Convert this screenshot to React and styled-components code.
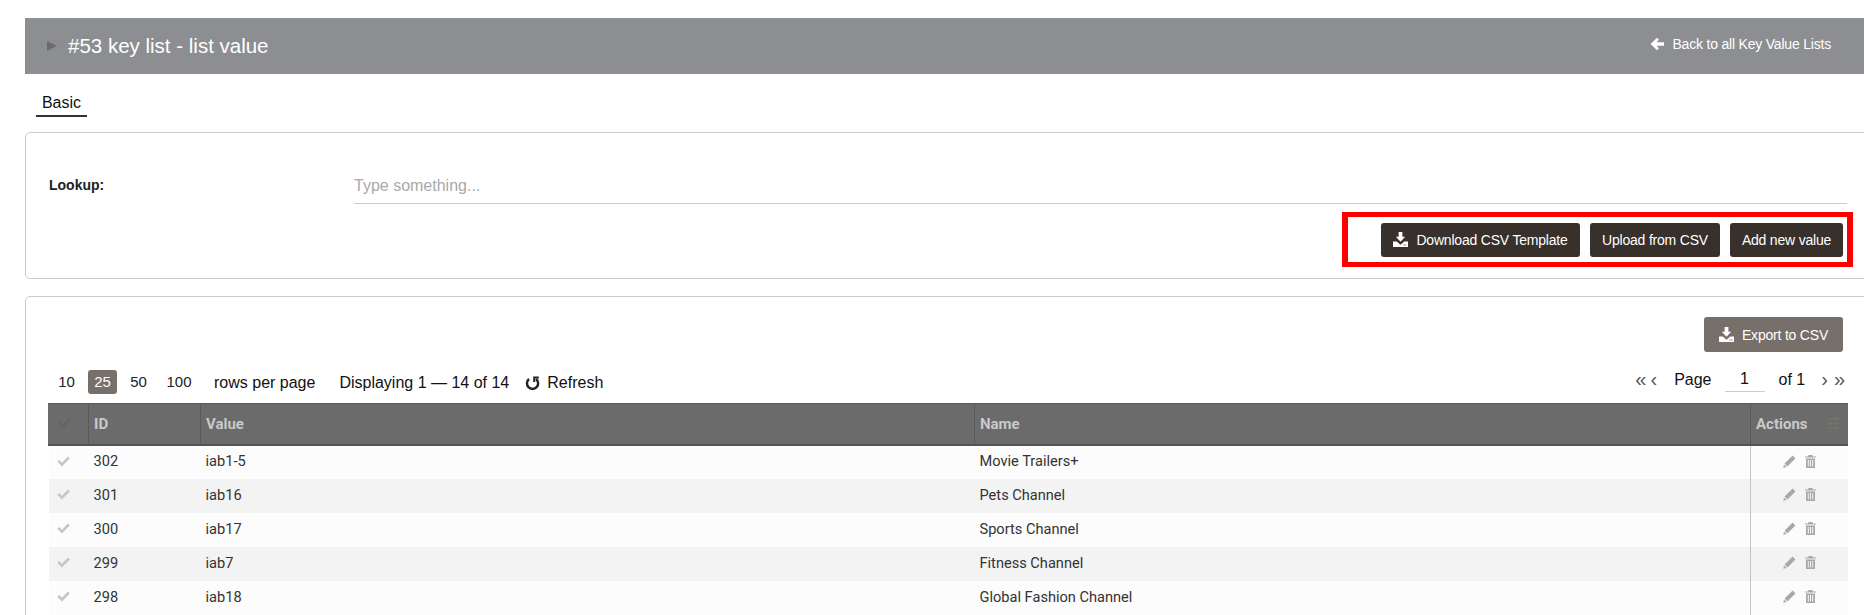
import React from "react";
import styled, { createGlobalStyle } from "styled-components";

const Global = createGlobalStyle`
  html, body { margin: 0; padding: 0; background: #fff; overflow: hidden; height: 615px; }
  body { font-family: "Liberation Sans", Arial, sans-serif; color: #111; }
  * { box-sizing: border-box; }
`;

const Page = styled.div`
  width: 1864px;
  height: 615px;
  overflow: hidden;
  padding: 18px 0 0 25px;
`;
const Header = styled.header`
  height: 56px;
  background: #8c8e91;
  display: flex;
  align-items: center;
  justify-content: space-between;
  padding: 0 33px 0 22px;
  color: #fff;
`;
const TitleWrap = styled.div`
  display: flex;
  align-items: center;
  gap: 11px;
`;
const Caret = styled.span`
  width: 0;
  height: 0;
  border-left: 10px solid #6f6c68;
  border-top: 5px solid transparent;
  border-bottom: 5px solid transparent;
`;
const Title = styled.h1`
  margin: 0;
  font-size: 20.5px;
  font-weight: 400;
`;
const BackLink = styled.a`
  display: flex;
  align-items: center;
  gap: 8px;
  font-size: 14px;
  margin-top: -5px;
  letter-spacing: -0.2px;
`;
const Tabs = styled.nav`
  display: flex;
  padding: 19px 0 0 11px;
  height: 58px;
`;
const Tab = styled.span`
  width: 51px;
  height: 24px;
  text-align: center;
  font-size: 16px;
  line-height: 19px;
  border-bottom: 2px solid #38302b;
  color: #111;
`;
const Card = styled.section`
  border: 1px solid #ccc;
  border-radius: 5px;
  background: #fff;
  margin-right: -12px;
`;
const LookupCard = styled(Card)`
  height: 147px;
  padding: 36px 28px 0 23px;
`;
const LookupRow = styled.div`
  display: grid;
  grid-template-columns: 305px 1fr;
  align-items: center;
  height: 35px;
`;
const Label = styled.label`
  font-size: 14px;
  font-weight: 700;
  color: #222;
  margin-top: -4px;
`;
const Field = styled.div`
  height: 35px;
  border-bottom: 1px solid #ccc;
  color: #a9a9a9;
  font-size: 16px;
  line-height: 34px;
`;
const ActionsOutline = styled.div`
  margin: 8px -6px 0 auto;
  width: 511px;
  height: 55px;
  border: 6px solid #f00;
  border-width: 5px 6px;
  display: flex;
  justify-content: flex-end;
  align-items: center;
  gap: 10px;
  padding-right: 4px;
`;
const Button = styled.button`
  height: ${(p) => p.$h}px;
  border: 0;
  border-radius: 3px;
  background: ${(p) => p.$bg || "#38302b"};
  color: #fff;
  font-family: inherit;
  font-size: 14px;
  letter-spacing: -0.2px;
  display: inline-flex;
  align-items: center;
  justify-content: center;
  gap: 8px;
  padding: 0;
  width: ${(p) => p.$w}px;
`;
const TableCard = styled(Card)`
  margin-top: 17px;
  height: 400px;
  padding: 20px 28px 0 22px;
`;
const ExportRow = styled.div`
  display: flex;
  justify-content: flex-end;
  padding-right: 4px;
`;
const PagingRow = styled.div`
  display: flex;
  align-items: center;
  justify-content: space-between;
  height: 24px;
  margin-top: 18px;
  font-size: 16px;
`;
const PagingLeft = styled.div`
  display: flex;
  align-items: center;
`;
const Size = styled.span`
  width: ${(p) => p.$w}px;
  height: 24px;
  line-height: 24px;
  text-align: center;
  font-size: 15px;
  border-radius: 3px;
  margin-right: ${(p) => p.$mr || 0}px;
  background: ${(p) => (p.$active ? "#766f6a" : "transparent")};
  color: ${(p) => (p.$active ? "#fff" : "#222")};
`;
const PagingText = styled.span`
  margin-top: 2px;
  margin-left: ${(p) => p.$ml || 0}px;
  margin-right: ${(p) => p.$mr || 0}px;
`;
const Refresh = styled.span`
  display: inline-flex;
  align-items: center;
  gap: 7px;
  margin: 2px 0 0 16px;
`;
const Pager = styled.div`
  display: flex;
  align-items: center;
  margin: 0 2px 4px 0;
`;
const PagerGlyph = styled.span`
  color: #555;
  font-size: 20px;
  line-height: 1;
  margin: -3px ${(p) => p.$mr || 0}px 0 ${(p) => p.$ml || 0}px;
`;
const PageInput = styled.span`
  width: 40px;
  height: 24px;
  border-bottom: 1px solid #ccc;
  text-align: center;
  margin: 0 14px 0 13px;
  line-height: 22px;
`;
const Table = styled.table`
  width: 1799px;
  margin-top: 9px;
  border-collapse: collapse;
  table-layout: fixed;
  font-family: Roboto, sans-serif;
`;
const Th = styled.th`
  height: 41px;
  background: #6b6b6b;
  color: #c9c9c9;
  font-size: 15px;
  font-weight: 700;
  text-align: left;
  padding: 0 5px;
  border-top: 1px solid #5a5a5a;
  border-bottom: 2px solid #555;
  border-left: 1px solid ${(p) => (p.$first ? "#6b6b6b" : "#5a5a5a")};
  width: ${(p) => p.$w}px;
`;
const ActionsHead = styled.div`
  display: flex;
  align-items: center;
  justify-content: space-between;
  padding-right: 3px;
`;
const Tr = styled.tr`
  background: ${(p) => (p.$odd ? "#f3f3f3" : "#fcfcfc")};
`;
const Td = styled.td`
  height: 34px;
  padding: 0 5px 2px;
  font-size: 14.6px;
  color: #333;
  border-left: ${(p) => (p.$rule ? "1px solid #c4c4c4" : "0")};
`;
const CheckCell = styled.div`
  width: 20px;
`;
const IconRow = styled.div`
  display: flex;
  justify-content: center;
  align-items: center;
  gap: 9px;
`;

const DownloadIcon = ({ size = 15 }) => (
  <svg width={size} height={size} viewBox="0 0 16 16" fill="#fff">
    <path d="M6 0h4v5h3L8 10.5 3 5h3z" />
    <path d="M0 10h4l4 3.5L12 10h4v6H0z" />
    <rect x="11" y="13.4" width="1.2" height="1.2" fill="#776" />
    <rect x="13" y="13.4" width="1.2" height="1.2" fill="#776" />
  </svg>
);
const BackIcon = () => (
  <svg width="14" height="14" viewBox="0 0 14 14" fill="#fff">
    <path d="M7 0.8 9 2.8 6.6 5.3H14v3.4H6.6L9 11.2 7 13.2 0.5 7z" />
  </svg>
);
const RefreshIcon = () => (
  <svg width="15" height="15" viewBox="0 0 15 15" fill="none" stroke="#222" strokeWidth="2.4">
    <path d="M4 3A5.6 5.6 0 1 0 11.1 3" />
    <path d="M13.8 1.6H9.2V6" strokeWidth="2" />
  </svg>
);
const CheckIcon = ({ color = "#c6c6c6" }) => (
  <svg width="13" height="11" viewBox="0 0 13 11" fill={color} style={{ display: "block", margin: "0 auto" }}>
    <path d="M0.3 5.8 2.2 4l2.7 2.7L10.9.6l1.9 1.9L4.9 10.4z" />
  </svg>
);
const PencilIcon = () => (
  <svg width="13" height="13" viewBox="0 0 13 13" fill="#a8a8a8">
    <path d="M9.6.6 12.4 3.4 4.4 11.4 1.6 8.6z" />
    <path d="M1 9.4 3.6 12 .3 12.7z" />
  </svg>
);
const TrashIcon = () => (
  <svg width="11" height="13" viewBox="0 0 11 13" fill="#a8a8a8">
    <path d="M3.6 0h3.8l.6 1.4H11v1.2H0V1.4h3z" />
    <path d="M1 3.4h9V13H1zM2.8 5v6.5h1V5zm2.2 0v6.5h1V5zm2.2 0v6.5h1V5z" fillRule="evenodd" />
  </svg>
);
const SlidersIcon = () => (
  <svg width="13" height="13" viewBox="0 0 13 13" fill="#77736c">
    <rect y="1" width="13" height="1.4" />
    <rect y="5.8" width="13" height="1.4" />
    <rect y="10.6" width="13" height="1.4" />
    <rect x="8" y="0" width="2" height="3.4" />
    <rect x="3" y="4.8" width="2" height="3.4" />
    <rect x="8" y="9.6" width="2" height="3.4" />
  </svg>
);

const rows = [
  ["302", "iab1-5", "Movie Trailers+"],
  ["301", "iab16", "Pets Channel"],
  ["300", "iab17", "Sports Channel"],
  ["299", "iab7", "Fitness Channel"],
  ["298", "iab18", "Global Fashion Channel"],
];

export default function App() {
  return (
    <Page>
      <Global />
      <Header>
        <TitleWrap>
          <Caret />
          <Title>#53 key list - list value</Title>
        </TitleWrap>
        <BackLink>
          <BackIcon />
          Back to all Key Value Lists
        </BackLink>
      </Header>
      <Tabs>
        <Tab>Basic</Tab>
      </Tabs>
      <LookupCard>
        <LookupRow>
          <Label>Lookup:</Label>
          <Field>Type something...</Field>
        </LookupRow>
        <ActionsOutline>
          <Button $w={199} $h={34}>
            <DownloadIcon />
            Download CSV Template
          </Button>
          <Button $w={130} $h={34}>Upload from CSV</Button>
          <Button $w={113} $h={34}>Add new value</Button>
        </ActionsOutline>
      </LookupCard>
      <TableCard>
        <ExportRow>
          <Button $w={139} $h={35} $bg="#766f6a">
            <DownloadIcon />
            Export to CSV
          </Button>
        </ExportRow>
        <PagingRow>
          <PagingLeft>
            <Size $w={37} $mr={3}>10</Size>
            <Size $w={29} $active>25</Size>
            <Size $w={43}>50</Size>
            <Size $w={38}>100</Size>
            <PagingText $ml={16} $mr={24}>rows per page</PagingText>
            <PagingText>Displaying 1 — 14 of 14</PagingText>
            <Refresh>
              <RefreshIcon />
              Refresh
            </Refresh>
          </PagingLeft>
          <Pager>
            <PagerGlyph $mr={4}>«</PagerGlyph>
            <PagerGlyph $mr={17}>‹</PagerGlyph>
            <span>Page</span>
            <PageInput>1</PageInput>
            <span>of 1</span>
            <PagerGlyph $ml={16} $mr={6}>›</PagerGlyph>
            <PagerGlyph>»</PagerGlyph>
          </Pager>
        </PagingRow>
        <Table>
          <thead>
            <tr>
              <Th $w={40} $first><CheckCell><CheckIcon color="#636363" /></CheckCell></Th>
              <Th $w={112}>ID</Th>
              <Th $w={774}>Value</Th>
              <Th $w={776}>Name</Th>
              <Th $w={97}>
                <ActionsHead>
                  Actions
                  <SlidersIcon />
                </ActionsHead>
              </Th>
            </tr>
          </thead>
          <tbody>
            {rows.map((r, i) => (
              <Tr key={r[0]} $odd={i % 2 === 1}>
                <Td><CheckCell><CheckIcon /></CheckCell></Td>
                <Td>{r[0]}</Td>
                <Td>{r[1]}</Td>
                <Td>{r[2]}</Td>
                <Td $rule>
                  <IconRow>
                    <PencilIcon />
                    <TrashIcon />
                  </IconRow>
                </Td>
              </Tr>
            ))}
          </tbody>
        </Table>
      </TableCard>
    </Page>
  );
}
